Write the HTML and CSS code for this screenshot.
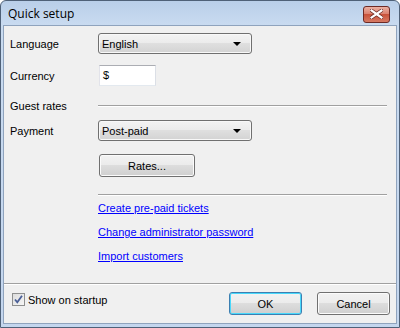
FILE: index.html
```html
<!DOCTYPE html>
<html lang="en">
<head>
  <meta charset="UTF-8">
  <title>Quick setup</title>
  <link rel="stylesheet" href="styles.css">
</head>
<body>
  <div class="window">
    <div class="titlebar">
      <span class="title">Quick setup</span>
      <button class="close-btn" aria-label="Close">
        <svg width="13" height="10" viewBox="0 0 13 10">
          <path d="M1.5 1.5 L11.5 8.5 M11.5 1.5 L1.5 8.5" stroke="#6b2a22" stroke-width="3.6" stroke-linecap="square"/>
          <path d="M1.5 1.5 L11.5 8.5 M11.5 1.5 L1.5 8.5" stroke="#fff" stroke-width="2.2" stroke-linecap="square"/>
        </svg>
      </button>
    </div>
    <div class="client">
      <div class="content">
        <div class="row">
          <label class="label">Language</label>
          <div class="combo"><span>English</span><span class="arrow"></span></div>
        </div>
        <div class="row">
          <label class="label">Currency</label>
          <div class="textbox">$</div>
        </div>
        <div class="group">
          <span class="label">Guest rates</span>
          <div class="group-line"></div>
        </div>
        <div class="row payment">
          <label class="label">Payment</label>
          <div class="combo"><span>Post-paid</span><span class="arrow"></span></div>
        </div>
        <div class="row rates-row">
          <span class="label"></span>
          <button class="btn rates-btn">Rates...</button>
        </div>
        <div class="row">
          <span class="label"></span>
          <div class="sep"></div>
        </div>
        <div class="links">
          <a href="#">Create pre-paid tickets</a>
          <a href="#">Change administrator password</a>
          <a href="#">Import customers</a>
        </div>
      </div>
      <div class="footer">
        <label class="check">
          <span class="checkbox">
            <svg width="11" height="11" viewBox="0 0 11 11">
              <path d="M2 5.5 L4.3 8.3 L9 1.8" fill="none" stroke="#4a5f97" stroke-width="1.8"/>
            </svg>
          </span>
          Show on startup
        </label>
        <div class="buttons">
          <button class="btn default">OK</button>
          <button class="btn">Cancel</button>
        </div>
      </div>
    </div>
  </div>
</body>
</html>
```

FILE: styles.css
```css
* {
  box-sizing: border-box;
}
body {
  margin: 0;
  font-family: "Liberation Sans", Arial, sans-serif;
  font-size: 11px;
  color: #000;
  background: #fff;
}
.window {
  width: 400px;
  height: 328px;
  border: 1px solid #4f6178;
  border-radius: 6px 6px 0 0;
  background: linear-gradient(#b9cfe9, #c9dbf0 24px, #c4d6ee);
  display: flex;
  flex-direction: column;
}
.titlebar {
  height: 24px;
  display: flex;
  align-items: center;
  justify-content: space-between;
  padding: 0 9px 0 7px;
}
.title {
  font-family: "Open Sans", "Liberation Sans", sans-serif;
  font-size: 12px;
  color: #000;
}
.close-btn {
  width: 27px;
  height: 17px;
  margin-top: 2px;
  padding: 0;
  border: 1px solid #6d2a25;
  border-radius: 3px;
  background: linear-gradient(#eab0a3, #dc8270 45%, #c9533b 50%, #d67a64);
  display: flex;
  align-items: center;
  justify-content: center;
}
.client {
  flex: 1;
  margin: 0 2px 3px 2px;
  border: 1px solid #8fa3bd;
  background: #f0f0f0;
  display: flex;
  flex-direction: column;
}
.content {
  flex: 1;
  padding: 7px 9px 0 6px;
}
.row {
  display: flex;
  align-items: center;
  margin-bottom: 11px;
}
.label {
  width: 88px;
  flex-shrink: 0;
}
.combo {
  width: 154px;
  height: 21px;
  border: 1px solid #707070;
  border-radius: 3px;
  background: linear-gradient(#f3f3f3, #ebebeb 50%, #dfdfdf 50%, #d3d3d3);
  box-shadow: inset 0 0 0 1px #f8f8f8;
  display: flex;
  align-items: center;
  justify-content: space-between;
  padding: 0 10px 0 3px;
}
.arrow {
  width: 0;
  height: 0;
  border-left: 4px solid transparent;
  border-right: 4px solid transparent;
  border-top: 4px solid #000;
}
.textbox {
  width: 57px;
  height: 21px;
  border: 1px solid #abadb3;
  border-left-color: #e2e3ea;
  border-right-color: #dbdfe6;
  border-bottom-color: #e3e9ef;
  background: #fff;
  padding: 3px 0 0 3px;
  margin-left: 1px;
}
.group {
  display: flex;
  align-items: center;
  height: 14px;
  margin-top: 13px;
  margin-bottom: 7px;
}
.group-line,
.sep {
  flex: 1;
  height: 2px;
  border-top: 1px solid #a0a0a0;
  border-bottom: 1px solid #fff;
}
.payment {
  margin-bottom: 13px;
}
.rates-row {
  margin-bottom: 17px;
}
.btn {
  font-family: inherit;
  font-size: 11px;
  color: #000;
  width: 73px;
  height: 23px;
  padding: 0;
  border: 1px solid #707070;
  border-radius: 3px;
  background: linear-gradient(#f2f2f2, #ebebeb 50%, #dddddd 50%, #cfcfcf);
  box-shadow: inset 0 0 0 1px #fbfbfb;
}
.rates-btn {
  width: 96px;
  margin-left: 1px;
}
.btn.default {
  border-color: #3c7fb1;
  box-shadow: inset 0 0 0 1px #48d8fb;
}
.links {
  display: flex;
  flex-direction: column;
  gap: 10px;
  padding-left: 88px;
  margin-top: -6px;
}
.links a {
  color: #0000ff;
  line-height: 14px;
}
.footer {
  height: 40px;
  border-top: 1px solid #a0a0a0;
  box-shadow: inset 0 1px 0 #fff;
  display: flex;
  align-items: flex-start;
  justify-content: space-between;
  padding: 8px 6px 0 8px;
}
.check {
  display: flex;
  align-items: center;
  gap: 3px;
  margin-top: 1px;
}
.checkbox {
  width: 13px;
  height: 13px;
  border: 1px solid #8e8f8f;
  background: linear-gradient(135deg, #dcdcdc, #f6f6f6);
  display: flex;
  align-items: center;
  justify-content: center;
}
.buttons {
  display: flex;
  gap: 15px;
}
```
